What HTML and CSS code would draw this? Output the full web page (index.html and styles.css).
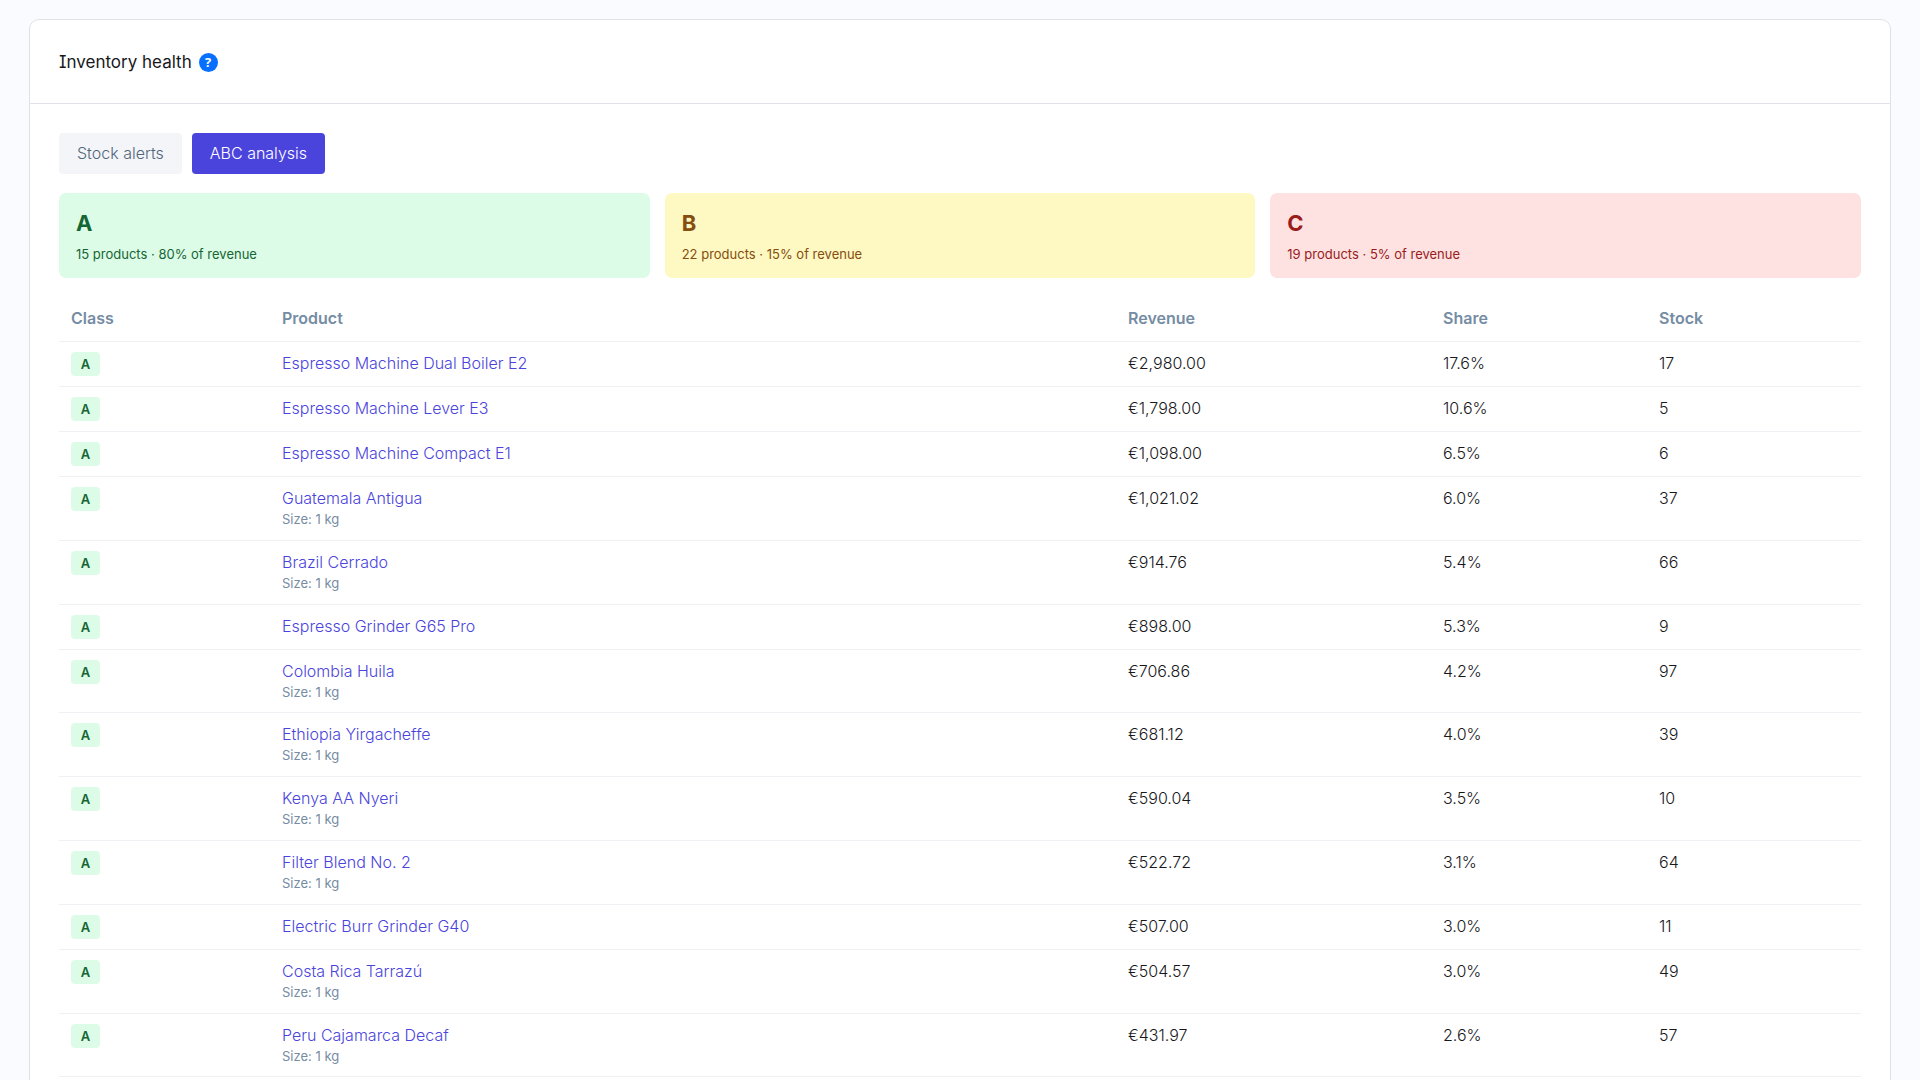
FILE: index.html
```html
<!DOCTYPE html>
<html lang="en">
<head>
<meta charset="utf-8">
<meta name="viewport" content="width=device-width, initial-scale=1">
<title>Inventory health</title>
<link rel="stylesheet" href="styles.css">
</head>
<body>
<main class="card">
  <header class="card-header">
    <h1 class="card-title">Inventory health</h1>
    <button class="help" type="button" aria-label="Help">?</button>
  </header>
  <div class="card-body">
    <nav class="tabs">
      <button class="tab" type="button">Stock alerts</button>
      <button class="tab tab-active" type="button">ABC analysis</button>
    </nav>
    <section class="summary">
      <div class="tile class-a"><strong class="tile-letter">A</strong><span class="tile-text">15 products · 80% of revenue</span></div>
      <div class="tile class-b"><strong class="tile-letter">B</strong><span class="tile-text">22 products · 15% of revenue</span></div>
      <div class="tile class-c"><strong class="tile-letter">C</strong><span class="tile-text">19 products · 5% of revenue</span></div>
    </section>
    <table class="products">
      <colgroup><col class="col-class"><col><col class="col-revenue"><col class="col-share"><col class="col-stock"></colgroup>
      <thead>
        <tr><th scope="col">Class</th><th scope="col">Product</th><th scope="col">Revenue</th><th scope="col">Share</th><th scope="col">Stock</th></tr>
      </thead>
      <tbody>
        <tr><td><span class="badge class-a">A</span></td><td><a class="product" href="#">Espresso Machine Dual Boiler E2</a></td><td>€2,980.00</td><td>17.6%</td><td>17</td></tr>
        <tr><td><span class="badge class-a">A</span></td><td><a class="product" href="#">Espresso Machine Lever E3</a></td><td>€1,798.00</td><td>10.6%</td><td>5</td></tr>
        <tr><td><span class="badge class-a">A</span></td><td><a class="product" href="#">Espresso Machine Compact E1</a></td><td>€1,098.00</td><td>6.5%</td><td>6</td></tr>
        <tr><td><span class="badge class-a">A</span></td><td><a class="product" href="#">Guatemala Antigua</a><div class="variant">Size: 1 kg</div></td><td>€1,021.02</td><td>6.0%</td><td>37</td></tr>
        <tr><td><span class="badge class-a">A</span></td><td><a class="product" href="#">Brazil Cerrado</a><div class="variant">Size: 1 kg</div></td><td>€914.76</td><td>5.4%</td><td>66</td></tr>
        <tr><td><span class="badge class-a">A</span></td><td><a class="product" href="#">Espresso Grinder G65 Pro</a></td><td>€898.00</td><td>5.3%</td><td>9</td></tr>
        <tr><td><span class="badge class-a">A</span></td><td><a class="product" href="#">Colombia Huila</a><div class="variant">Size: 1 kg</div></td><td>€706.86</td><td>4.2%</td><td>97</td></tr>
        <tr><td><span class="badge class-a">A</span></td><td><a class="product" href="#">Ethiopia Yirgacheffe</a><div class="variant">Size: 1 kg</div></td><td>€681.12</td><td>4.0%</td><td>39</td></tr>
        <tr><td><span class="badge class-a">A</span></td><td><a class="product" href="#">Kenya AA Nyeri</a><div class="variant">Size: 1 kg</div></td><td>€590.04</td><td>3.5%</td><td>10</td></tr>
        <tr><td><span class="badge class-a">A</span></td><td><a class="product" href="#">Filter Blend No. 2</a><div class="variant">Size: 1 kg</div></td><td>€522.72</td><td>3.1%</td><td>64</td></tr>
        <tr><td><span class="badge class-a">A</span></td><td><a class="product" href="#">Electric Burr Grinder G40</a></td><td>€507.00</td><td>3.0%</td><td>11</td></tr>
        <tr><td><span class="badge class-a">A</span></td><td><a class="product" href="#">Costa Rica Tarrazú</a><div class="variant">Size: 1 kg</div></td><td>€504.57</td><td>3.0%</td><td>49</td></tr>
        <tr><td><span class="badge class-a">A</span></td><td><a class="product" href="#">Peru Cajamarca Decaf</a><div class="variant">Size: 1 kg</div></td><td>€431.97</td><td>2.6%</td><td>57</td></tr>
      </tbody>
    </table>
  </div>
</main>
</body>
</html>
```
FILE: styles.css
```css
* {
  box-sizing: border-box;
}

body {
  margin: 0;
  padding: 19px 29px;
  background: #fafbff;
  color: #18181b;
  font-family: Inter, "Liberation Sans", sans-serif;
  font-size: 16px;
  font-weight: 300;
  line-height: 22px;
  font-feature-settings: "cv08";
}

button {
  border: 0;
  font: inherit;
  cursor: pointer;
}

.card {
  background: #fff;
  border: 1px solid #e0e2e8;
  border-radius: 10px;
}

.card-header {
  display: flex;
  align-items: center;
  gap: 7px;
  padding: 30px 29px 29px;
  border-bottom: 1px solid #e0e2e8;
}

.card-title {
  margin: 0;
  font-size: 17px;
  font-weight: 400;
  line-height: 24px;
}

.help {
  width: 19px;
  height: 19px;
  padding: 0;
  border-radius: 50%;
  background: #0870ff;
  color: #fff;
  font-family: "Open Sans", sans-serif;
  font-size: 13px;
  font-weight: 700;
  line-height: 19px;
}

.card-body {
  padding: 29px;
}

.tabs {
  display: flex;
  gap: 10px;
  margin-bottom: 19px;
}

.tab {
  padding: 9px 18px 10px;
  border-radius: 4px;
  background: #f4f5f8;
  color: #52667a;
}

.tab-active {
  background: #4b44dc;
  color: #fff;
}

.summary {
  display: grid;
  grid-template-columns: repeat(3, 1fr);
  gap: 15px;
  margin-bottom: 18px;
}

.tile {
  display: flex;
  flex-direction: column;
  gap: 5px;
  padding: 14px 17px;
  border-radius: 7px;
}

.tile-letter {
  font-size: 22px;
  font-weight: 700;
  line-height: 32px;
}

.tile-text {
  font-size: 13px;
  font-weight: 400;
  line-height: 20px;
}

.class-a {
  background: #dcfce7;
  color: #166534;
}

.class-b {
  background: #fef9c3;
  color: #854d0e;
}

.class-c {
  background: #fee2e2;
  color: #991b1b;
}

.products {
  width: 100%;
  border-collapse: separate;
  border-spacing: 0;
  table-layout: fixed;
}

.col-class {
  width: 211px;
}

.col-revenue {
  width: 315px;
}

.col-share {
  width: 216px;
}

.col-stock {
  width: 214px;
}

.products th,
.products td {
  padding: 10px 12px;
  border-bottom: 1px solid #f0f1f5;
  text-align: left;
  vertical-align: top;
}

.products th {
  padding: 11px 12px 12px;
  color: #758ca3;
  font-weight: 600;
}

.badge {
  display: block;
  width: 29px;
  border-radius: 4px;
  font-size: 13px;
  font-weight: 600;
  line-height: 24px;
  text-align: center;
}

.product {
  color: #4b44dc;
  text-decoration: none;
}

.variant {
  color: #758ca3;
  font-size: 13px;
  font-weight: 400;
  line-height: 1.6;
}
```
